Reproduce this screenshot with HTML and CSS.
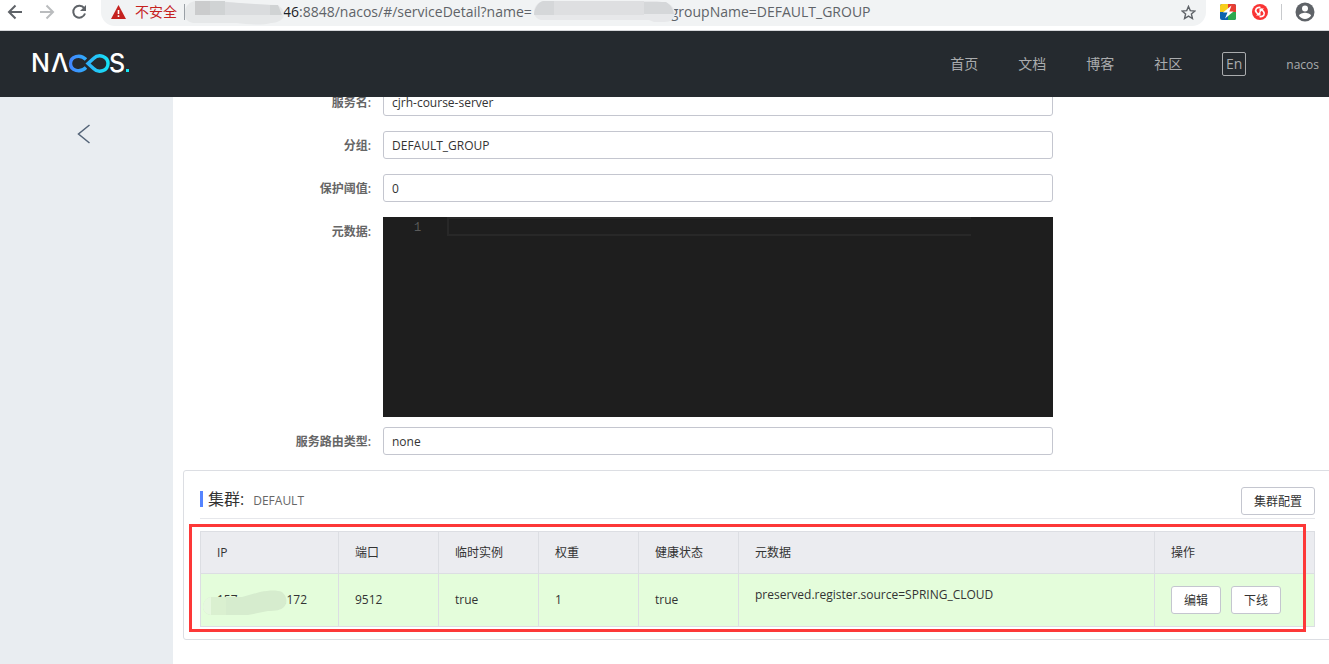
FILE: index.html
```html
<!DOCTYPE html>
<html lang="zh-CN">
<head>
<meta charset="utf-8">
<title>Nacos</title>
<link rel="stylesheet" href="styles.css">
</head>
<body>
<div class="toolbar">
  <div class="toolbar-nav">
    <button class="tool" aria-label="后退"><svg width="16" height="16" viewBox="0 0 16 16" fill="none" stroke="#5f6368" stroke-width="2"><path d="M15 8H2M8.500 1.500L2 8l6.500 6.500"/></svg></button>
    <button class="tool" aria-label="前进"><svg width="16" height="16" viewBox="0 0 16 16" fill="none" stroke="#babcbe" stroke-width="2"><path d="M1 8h13M7.500 1.500L14 8l-6.500 6.500"/></svg></button>
    <button class="tool" aria-label="刷新"><svg width="16" height="16" viewBox="0 0 16 16"><path d="M13.200 4.200A6 6 0 1 0 14 9.500" fill="none" stroke="#5f6368" stroke-width="2"/><path d="M15 1v6H9z" fill="#5f6368"/></svg></button>
  </div>
  <div class="address">
    <svg class="warn" width="15" height="14" viewBox="0 0 15 14"><path d="M7.500 0L15 14H0z" fill="#c5221f"/><path d="M6.700 5h1.600v4H6.700zM6.700 10.300h1.600v1.600H6.700z" fill="#fff"/></svg>
    <span class="unsafe">不安全</span>
    <span class="divider"></span>
    <svg class="mask mask-host" width="100" height="24" viewBox="0 0 100 24"><path d="M10 0h26l24 3 32 1c6 3 8 7 6 13-3 4-9 5-12 5-10 3-25 1-34 0H8c-6-1-9-5-8-12C1 4 5 1 10 0z" fill="#e6e8e9"/><path d="M10 0h15v14H10z" fill="#cbcccd"/><path d="M25 0h15v14H25zM85 4h8l4 10H85z" fill="#d0d3d4"/><path d="M40 1l15 1 15 1 15 1v10H40z" fill="#dadcde"/></svg>
    <span class="url"><span class="host">46</span>:8848/nacos/#/serviceDetail?name=</span>
    <svg class="mask mask-name" width="141" height="22" viewBox="0 0 141 22"><path d="M9 0h114l10 2c5 2 8 6 8 10 0 6-5 9-10 9h-11l-5-2H7c-4-1-7-4-7-8 0-5 4-10 9-11z" fill="#e7e8ea"/><path d="M9 0h11v14H0c0-6 4-13 9-14zM110 1h22c5 3 7 7 8 12h-30z" fill="#d5d7d9"/><path d="M20 0h90v14H20z" fill="#dedfe1"/></svg>
    <span class="url">groupName=DEFAULT_GROUP</span>
    <button class="tool star" aria-label="收藏"><svg width="15" height="15" viewBox="0 0 16 16" fill="none" stroke="#5f6368" stroke-width="1.500"><path d="M8 1.500l1.900 4.500 4.900.4-3.700 3.200 1.100 4.800L8 11.900l-4.200 2.500 1.100-4.800L1.200 6.400 6.100 6z"/></svg></button>
  </div>
  <div class="extensions">
    <button class="tool" aria-label="加速扩展"><svg width="16" height="16" viewBox="0 0 16 16"><rect width="16" height="16" rx="2" fill="#0d62ae"/><path d="M2 0h6v8H0V2a2 2 0 0 1 2-2z" fill="#f8cf1c"/><path d="M8 0h6a2 2 0 0 1 2 2v6H8z" fill="#e63d32"/><path d="M8 8h8v6a2 2 0 0 1-2 2H8z" fill="#2da84f"/><path d="M11.500 1.500L3 8.500h4.500L5 14.500l8.500-7H9.300z" fill="#fff"/></svg></button>
    <button class="tool" aria-label="同步扩展"><svg width="16" height="16" viewBox="0 0 16 16"><circle cx="8" cy="8" r="8" fill="#fa3434"/><path d="M8.500 3.500C4.500 2.800 2.500 6 4.500 8.500l2.500 2.500M7.500 12.500c4 .7 6-2.500 4-5L9 5" fill="none" stroke="#fff" stroke-width="1.700"/><path d="M4 11.500h4.500V7zM12 4.500H7.500V9z" fill="#fff"/></svg></button>
    <span class="divider pale"></span>
    <button class="tool" aria-label="用户"><svg width="20" height="20" viewBox="0 0 20 20"><circle cx="10" cy="10" r="9.500" fill="#5f6368"/><circle cx="10" cy="6.500" r="3" fill="#fff"/><path d="M4 13.800c0-2 4-3 6-3s6 1 6 3c-1.300 2-3.500 3.200-6 3.200s-4.700-1.200-6-3.200z" fill="#fff"/></svg></button>
  </div>
</div>

<header class="header">
  <a class="logo" href="#" aria-label="Nacos">
    <svg width="104" height="40" viewBox="-4 -10 104 40">
      <defs><linearGradient id="loop" gradientUnits="userSpaceOnUse" x1="37" y1="0" x2="77" y2="0"><stop offset="0" stop-color="#4286ff"/><stop offset="1" stop-color="#14e6f5"/></linearGradient></defs>
      <text x="-2" y="18" class="logo-text">N</text>
      <text x="18" y="18" class="logo-text">Λ</text>
      <path d="M53 13.500C47 19.500 37.500 16.500 37.500 9.500S47-.500 53 5.500M55 9.500l5.500-5C66-1 75 2.500 75 9.500S66 20 60.500 14.500z" fill="none" stroke="url(#loop)" stroke-width="3.400"/>
      <text x="76" y="18" class="logo-text">S</text>
      <rect x="93" y="15" width="3" height="3" fill="#14e6f5"/>
    </svg>
  </a>
  <nav class="menu">
    <a href="#">首页</a>
    <a href="#">文档</a>
    <a href="#">博客</a>
    <a href="#">社区</a>
    <button class="lang">En</button>
    <a class="user" href="#">nacos</a>
  </nav>
</header>

<div class="body">
  <aside class="side">
    <button class="tool back" aria-label="返回"><svg width="14" height="20" viewBox="0 0 14 20" fill="none" stroke="#546478" stroke-width="1.500"><path d="M12.500 1L1.500 10l11 9"/></svg></button>
  </aside>
  <main class="main">
    <form class="form">
      <label for="name">服务名:</label><input id="name" value="cjrh-course-server">
      <label for="group">分组:</label><input id="group" value="DEFAULT_GROUP">
      <label for="threshold">保护阈值:</label><input id="threshold" value="0">
      <label for="meta">元数据:</label>
      <div class="editor"><span class="line-no">1</span><textarea id="meta" rows="1"></textarea></div>
      <label for="selector">服务路由类型:</label><input id="selector" value="none">
    </form>
    <section class="panel">
      <div class="panel-head">
        <h2>集群:</h2><span class="cluster">DEFAULT</span>
        <button class="btn config">集群配置</button>
      </div>
      <table class="table">
        <colgroup><col class="c-ip"><col class="c-sm"><col class="c-sm"><col class="c-sm"><col class="c-sm"><col><col class="c-op"></colgroup>
        <thead><tr><th>IP</th><th>端口</th><th>临时实例</th><th>权重</th><th>健康状态</th><th>元数据</th><th>操作</th></tr></thead>
        <tbody><tr>
          <td><div class="ip"><span>157</span><span>.172</span><svg class="ip-mask" width="86" height="26" viewBox="0 0 86 26"><path d="M1 17c0-5 3-9 8-10h31l18-5c10-2 17-2 22 0 5 4 6 11 2 15-3 3-8 4-16 4l-20 4H8c-4-1-7-4-7-8z" fill="#d6ecce"/><path d="M1 17c0-5 3-9 8-10v18c-5-1-8-4-8-8z" fill="#e6f8df"/><path d="M9 7h15v18H9z" fill="#daf0d0"/></svg></div></td>
          <td>9512</td><td>true</td><td>1</td><td>true</td>
          <td class="meta">preserved.register.source=SPRING_CLOUD</td>
          <td><div class="actions"><button class="btn">编辑</button><button class="btn">下线</button></div></td>
        </tr></tbody>
      </table>
      <div class="highlight"></div>
    </section>
  </main>
</div>
</body>
</html>
```
FILE: styles.css
```css
* { box-sizing: border-box; }
body {
  margin: 0;
  min-height: 100vh;
  display: flex;
  flex-direction: column;
  overflow: hidden;
  background: #fff;
  color: #333;
  font: 12px/18px "Open Sans", "Noto Sans CJK SC", sans-serif;
}
button, input, textarea { font: inherit; color: inherit; }
a { color: inherit; text-decoration: none; }
svg { display: block; flex: none; }

/* browser toolbar */
.toolbar {
  display: flex;
  height: 31px;
  padding: 0 14px 0 7px;
  border-bottom: 1px solid #d5d7da;
  font-size: 14px;
}
.tool { border: 0; padding: 0; background: none; display: block; }
.toolbar-nav, .extensions { display: flex; align-items: center; height: 24px; gap: 16px; }
.address {
  flex: 1;
  display: flex;
  align-items: center;
  height: 26px;
  margin: 0 14px;
  padding: 0 10px 2px;
  border-radius: 0 0 14px 14px;
  background: #f1f3f4;
  color: #5f6368;
  white-space: nowrap;
}
.warn { margin-right: 9px; }
.unsafe { color: #c5221f; }
.divider { width: 1px; height: 16px; margin-left: 7px; background: #9aa0a6; }
.divider.pale { margin: 0 -3px; background: #c8cacd; }
.mask { position: relative; }
.mask-host { margin: 1px -2px 0 0; }
.mask-name { margin: 0 -4px 0 2px; }
.host { color: #202124; }
.star { margin-left: auto; }

/* site header */
.header {
  position: relative;
  z-index: 1;
  display: flex;
  align-items: center;
  justify-content: space-between;
  height: 66px;
  padding: 0 10px 0 29px;
  background: #252a2f;
  color: #aaacae;
}
.logo-text { font: 500 25px Inter, sans-serif; fill: #fff; }
.menu { display: flex; align-items: center; gap: 40px; font-size: 14px; }
.lang {
  width: 24px;
  height: 24px;
  padding: 0;
  border: 1px solid #aaacae;
  border-radius: 2px;
  background: none;
  line-height: 20px;
}
.user { padding-top: 2px; font-size: 12px; }

/* layout */
.body { flex: 1; display: grid; grid-template-columns: 173px minmax(0, 1fr); }
.side { background: #e9edf1; padding: 27px 0 0 77px; }
.main { margin-top: -9px; padding-left: 10px; }

.form {
  display: grid;
  grid-template-columns: 188px minmax(0, 670px);
  column-gap: 12px;
  row-gap: 15px;
}
.form label { height: 28px; text-align: right; line-height: 30px; font-weight: 600; color: #666; }
.form input {
  height: 28px;
  padding: 0 8px;
  border: 1px solid #c4c6cf;
  border-radius: 3px;
  background: #fff;
}
.editor {
  display: flex;
  align-items: flex-start;
  height: 200px;
  margin-bottom: -5px;
  background: #1e1e1e;
  font: 12px/19px "Liberation Mono", monospace;
}
.line-no { width: 64px; padding: 2px 0 0 31px; color: #5a5a5a; }
.editor textarea {
  width: 524px;
  height: 19px;
  padding: 0;
  border: 2px solid #282828;
  border-right: 0;
  background: none;
  resize: none;
  color: #d4d4d4;
}

.panel {
  position: relative;
  margin: 15px -3px 0 0;
  padding: 16px 16px 12px;
  border: 1px solid #dcdee3;
  border-radius: 3px;
}
.panel-head {
  display: flex;
  align-items: center;
  height: 32px;
  padding-bottom: 3px;
  border-bottom: 1px solid #e6e7eb;
}
.panel-head h2 {
  margin: 0 9px 4px 0;
  padding-left: 5px;
  border-left: 3px solid #5584ff;
  font-size: 16px;
  font-weight: 400;
  line-height: 16px;
}
.cluster { color: #666; }
.config { margin-left: auto; }
.btn {
  height: 28px;
  padding: 1px 12px 0;
  border: 1px solid #c4c6cf;
  border-radius: 3px;
  background: #fff;
  line-height: 25px;
}

.table {
  width: 100%;
  margin-top: 12px;
  table-layout: fixed;
  border-collapse: collapse;
}
.c-ip { width: 138px; }
.c-sm { width: 100px; }
.c-op { width: 160px; }
.table th, .table td {
  padding: 0 16px;
  border: 1px solid #dcdee3;
  text-align: left;
  font-weight: 400;
}
.table th { height: 42px; background: #ebecf0; }
.table td { height: 53px; background: #e4fddb; }
.table td.meta { padding-bottom: 10px; }
.ip { position: relative; display: flex; justify-content: space-between; padding-right: 15px; }
.ip-mask { position: absolute; left: -15px; top: -1px; }
.actions { display: flex; gap: 10px; }
.highlight {
  position: absolute;
  inset: 53px 25px 7px 5px;
  border: 3px solid #fd3838;
  pointer-events: none;
}
```
